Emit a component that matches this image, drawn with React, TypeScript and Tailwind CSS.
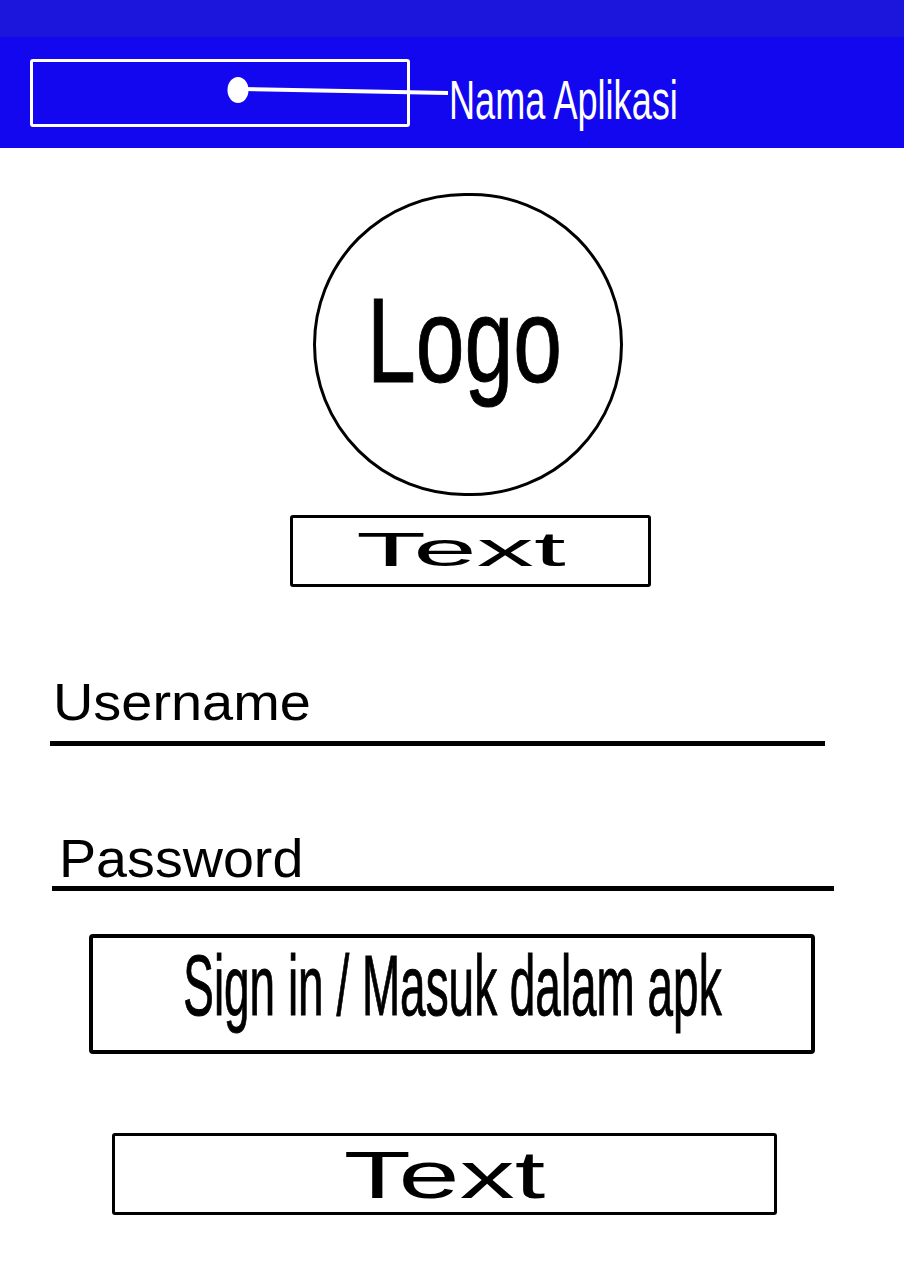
import React from "react";

const FONT = "font-['Liberation_Sans',Arial,sans-serif]";

function Header() {
  return (
    <div>
      <div className="h-[37px] bg-[#1c16dc]" />
      <div className="h-[111px] bg-[#1207ef] flex items-start pl-[30px] pt-[22px]">
        <div className="relative w-[380px] h-[68px] border-[3px] border-white rounded-[3px]">
          {/* pin + leader line */}
          <svg
            className="absolute left-[193px] top-[11px] overflow-visible"
            width="226"
            height="36"
            viewBox="0 0 226 36"
          >
            <line x1="16" y1="16" x2="222" y2="20" stroke="white" strokeWidth="4" />
            <ellipse cx="12" cy="17" rx="10.5" ry="13" fill="white" />
          </svg>
        </div>
        <span className="mt-[13px] ml-[39px] inline-block origin-left scale-x-[0.645] text-[56px] leading-none text-white whitespace-nowrap">
          Nama Aplikasi
        </span>
      </div>
    </div>
  );
}

function Field({ label, scale, size, textMl, textMt, lineMl, lineW, lineMt }: {
  label: string;
  scale: string;
  size: string;
  textMl: string;
  textMt: string;
  lineMl: string;
  lineW: string;
  lineMt: string;
}) {
  return (
    <div className="flex flex-col items-start">
      <span className={`${textMt} ${textMl} ${size} ${scale} inline-block origin-left leading-none text-black whitespace-nowrap`}>
        {label}
      </span>
      <div className={`${lineMt} ${lineMl} ${lineW} h-[5px] bg-black`} />
    </div>
  );
}

export default function App() {
  return (
    <div className={`${FONT} min-h-[1280px] w-full bg-white overflow-hidden`}>
      <Header />

      <div className="flex flex-col items-start">
        {/* logo circle */}
        <div className="mt-[45px] ml-[313px] w-[310px] h-[303px] rounded-full border-[3px] border-black flex items-center justify-center pb-[10px] pr-[8px]">
          <span className="inline-block scale-x-[0.73] text-[120px] leading-none text-black whitespace-nowrap [-webkit-text-stroke:1px_black]">
            Logo
          </span>
        </div>

        {/* small text box */}
        <div className="mt-[19px] ml-[290px] w-[361px] h-[72px] border-[3px] border-black rounded-[3px] flex items-center justify-center pb-[4px] pr-[20px]">
          <span className="inline-block scale-x-[2.33] text-[49px] leading-none text-black whitespace-nowrap">
            Text
          </span>
        </div>

        <Field
          label="Username"
          size="text-[52px]"
          scale="scale-x-[1.075]"
          textMt="mt-[89px]"
          textMl="ml-[53px]"
          lineMt="mt-[13px]"
          lineMl="ml-[50px]"
          lineW="w-[775px]"
        />

        <Field
          label="Password"
          size="text-[53px]"
          scale="scale-x-[1.05]"
          textMt="mt-[86px]"
          textMl="ml-[59px]"
          lineMt="mt-[1px]"
          lineMl="ml-[52px]"
          lineW="w-[782px]"
        />

        {/* sign in button */}
        <div className="mt-[43px] ml-[89px] w-[726px] h-[120px] border-[4px] border-black rounded-[4px] flex items-start justify-center">
          <span className="mt-[5px] inline-block scale-x-[0.54] text-[85px] leading-none text-black whitespace-nowrap [-webkit-text-stroke:1px_black]">
            Sign in / Masuk dalam apk
          </span>
        </div>

        {/* bottom text box */}
        <div className="mt-[79px] ml-[112px] w-[665px] h-[82px] border-[3px] border-black rounded-[3px] flex items-start justify-center">
          <span className="mt-[5px] inline-block scale-x-[1.64] text-[67px] leading-none text-black whitespace-nowrap">
            Text
          </span>
        </div>
      </div>
    </div>
  );
}
